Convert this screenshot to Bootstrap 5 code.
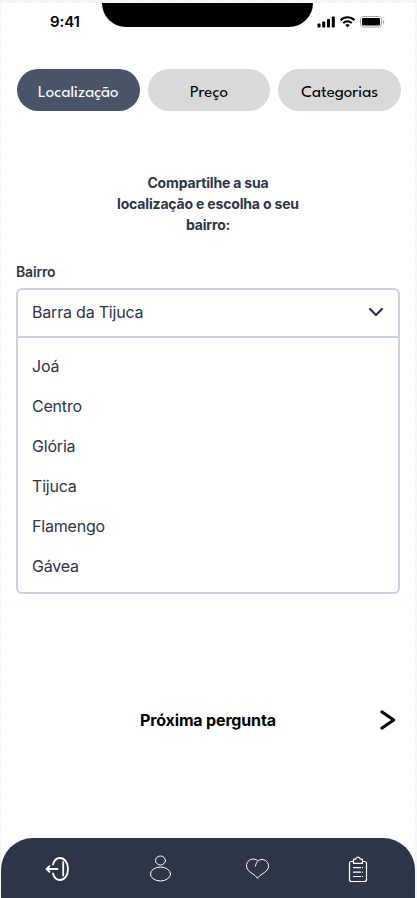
<!DOCTYPE html>
<html lang="pt-BR">
<head>
<meta charset="utf-8">
<meta name="viewport" content="width=device-width, initial-scale=1">
<title>Localização</title>
<link href="https://cdn.jsdelivr.net/npm/bootstrap@5.3.0/dist/css/bootstrap.min.css" rel="stylesheet">
<style>
html,body{height:898px;overflow:hidden}
body{font-family:Inter,"Liberation Sans",sans-serif;color:#2d3648;background:repeating-conic-gradient(#f4f4f4 0 25%,#f8f8f8 0 50%) 0 0/16px 16px}
.phone{width:414px;height:895px;margin:3px 0 0 1px}
.status{height:66px}
.clock{width:101px;padding-top:7px;padding-left:49px;font-size:15px;font-weight:600;line-height:24px;letter-spacing:-.1px;color:#000}
.notch{width:211px;height:24px;border-radius:0 0 24px 24px}
.signals{padding:12px 0 0 4px}
.tabs{gap:8px;padding:0 14px 0 16px}
.tabs .btn{flex:1 1 0;height:42px;padding:6px 0 0;border:0;font:400 17px/36px "League Spartan",Lato,sans-serif;background:#d9d9d9;color:#000}
.tabs .btn.active{background:#4a5468;color:#fff}
.prompt{margin:61px 0 0;font-size:14px;line-height:21px;font-weight:700;letter-spacing:-.17px}
.field{margin-top:27px;padding:0 15px}
.field label{font-size:14px;line-height:20px;font-weight:600;letter-spacing:-.17px;margin-bottom:6px}
.picker{border:2px solid #cbd2e0;border-radius:6px;height:306px;font-size:16px;letter-spacing:-.2px}
.picked{height:48px;padding:0 14px 2px;border-bottom:2px solid #cbd2e0}
.options{padding-top:8px}
.options li{line-height:24px;padding:8px 14px;height:40px}
.next{margin-top:106px;height:40px;color:#000;font-size:16px;font-weight:700;letter-spacing:-.16px}
.bottom{height:60px;border-radius:32px 32px 0 0;background:#2d3648}
</style>
<script src="https://cdn.jsdelivr.net/npm/bootstrap@5.3.0/dist/js/bootstrap.bundle.min.js"></script>
</head>
<body>
<main class="phone bg-white d-flex flex-column">
  <header class="status d-flex align-items-start">
    <div class="clock">9:41</div>
    <div class="notch bg-black"></div>
    <div class="signals">
      <svg class="d-block" width="68" height="14" viewBox="317 15 68 14" fill="none">
        <g fill="#000"><rect x="317.5" y="23.5" width="3" height="4" rx=".8"/><rect x="322.2" y="21.5" width="3" height="6" rx=".8"/><rect x="327" y="19" width="3" height="8.500" rx=".8"/><rect x="331.800" y="16.500" width="3" height="11" rx=".8"/></g>
        <g stroke="#000" stroke-width="2"><path d="M340.600 20.300a9.500 9.500 0 0 1 13.800 0M343.200 23.100a6 6 0 0 1 8.600 0"/></g>
        <path d="M345.200 25a3.400 3.400 0 0 1 4.600 0l-2.300 2.500z" fill="#000"/>
        <rect x="360.500" y="16.500" width="21" height="10.500" rx="2.800" stroke="#a6a6a6"/>
        <rect x="362" y="18" width="18" height="7.500" rx="1.300" fill="#000"/>
        <path d="M383 20v3.800q1.300-.6 1.300-1.900T383 20" fill="#a6a6a6"/>
      </svg>
    </div>
  </header>
  <nav class="tabs d-flex">
    <button class="btn rounded-pill active">Localização</button>
    <button class="btn rounded-pill">Preço</button>
    <button class="btn rounded-pill">Categorias</button>
  </nav>
  <p class="prompt text-center">Compartilhe a sua<br>localização e escolha o seu<br>bairro:</p>
  <section class="field">
    <label class="d-block">Bairro</label>
    <div class="picker">
      <div class="picked d-flex align-items-center justify-content-between">
        <span>Barra da Tijuca</span>
        <svg width="16" height="10" viewBox="0 0 16 10" fill="none" stroke="#2d3648" stroke-width="2.200" stroke-linecap="round" stroke-linejoin="round"><path d="M2 2l6 6 6-6"/></svg>
      </div>
      <ul class="options list-unstyled mb-0">
        <li>Joá</li><li>Centro</li><li>Glória</li><li>Tijuca</li><li>Flamengo</li><li>Gávea</li>
      </ul>
    </div>
  </section>
  <div class="next row g-0 align-items-center">
    <div class="col-2"></div>
    <div class="col-8 text-center">Próxima pergunta</div>
    <div class="col-2 d-flex justify-content-end pe-3"><svg width="20" height="22" viewBox="0 0 20 22" fill="none" stroke="#000" stroke-width="3.200" stroke-linecap="round" stroke-linejoin="round"><path d="M3 3L14.700 11 3 19"/></svg></div>
  </div>
  <footer class="bottom mt-auto">
    <svg class="d-block" width="414" height="60" viewBox="1 838 414 60" fill="none" stroke="#fff" stroke-linecap="round" stroke-linejoin="round">
      <g stroke-width="1.800"><path d="M53 864.500c1-4 3.400-6.500 7-6.500 4.600 0 8 4.600 8 11s-3.400 11-8 11c-3.600 0-6-2.500-7-6.500M57.500 869H46.500M49.500 866.200l-3 2.800 3 2.800"/><path d="M63.200 862v13.500"/></g>
      <g stroke-width="1"><ellipse cx="160.500" cy="860.500" rx="5" ry="4.500"/><ellipse cx="160.500" cy="874" rx="10" ry="7"/>
      <path d="M257.500 878c-3-4-8-5.300-10-8.700-3.700-6.500 3.500-13.300 9.700-9.100M255.500 866.200c.2-3.300 2.500-6.700 6.500-6.700 5 0 8 5.500 5.800 9.500-1.800 3.600-7.300 5-10.300 9"/></g>
      <g stroke-width="1.200"><path d="M353.500 861.500h-2q-2 0-2 2v16q0 2 2 2h13q2 0 2-2v-16q0-2-2-2h-2"/><path d="M353.500 863.300v-3.300q0-.8 1-.8h1.300q.2-2 2.200-2t2.200 2h1.300q1 0 1 .8v3.300z"/><path d="M353.500 867.700h7M353.500 872.200h7M353.500 876.500h7M362.500 867.700h.1M362.500 872.200h.1M362.500 876.500h.1"/></g>
    </svg>
  </footer>
</main>
</body>
</html>
